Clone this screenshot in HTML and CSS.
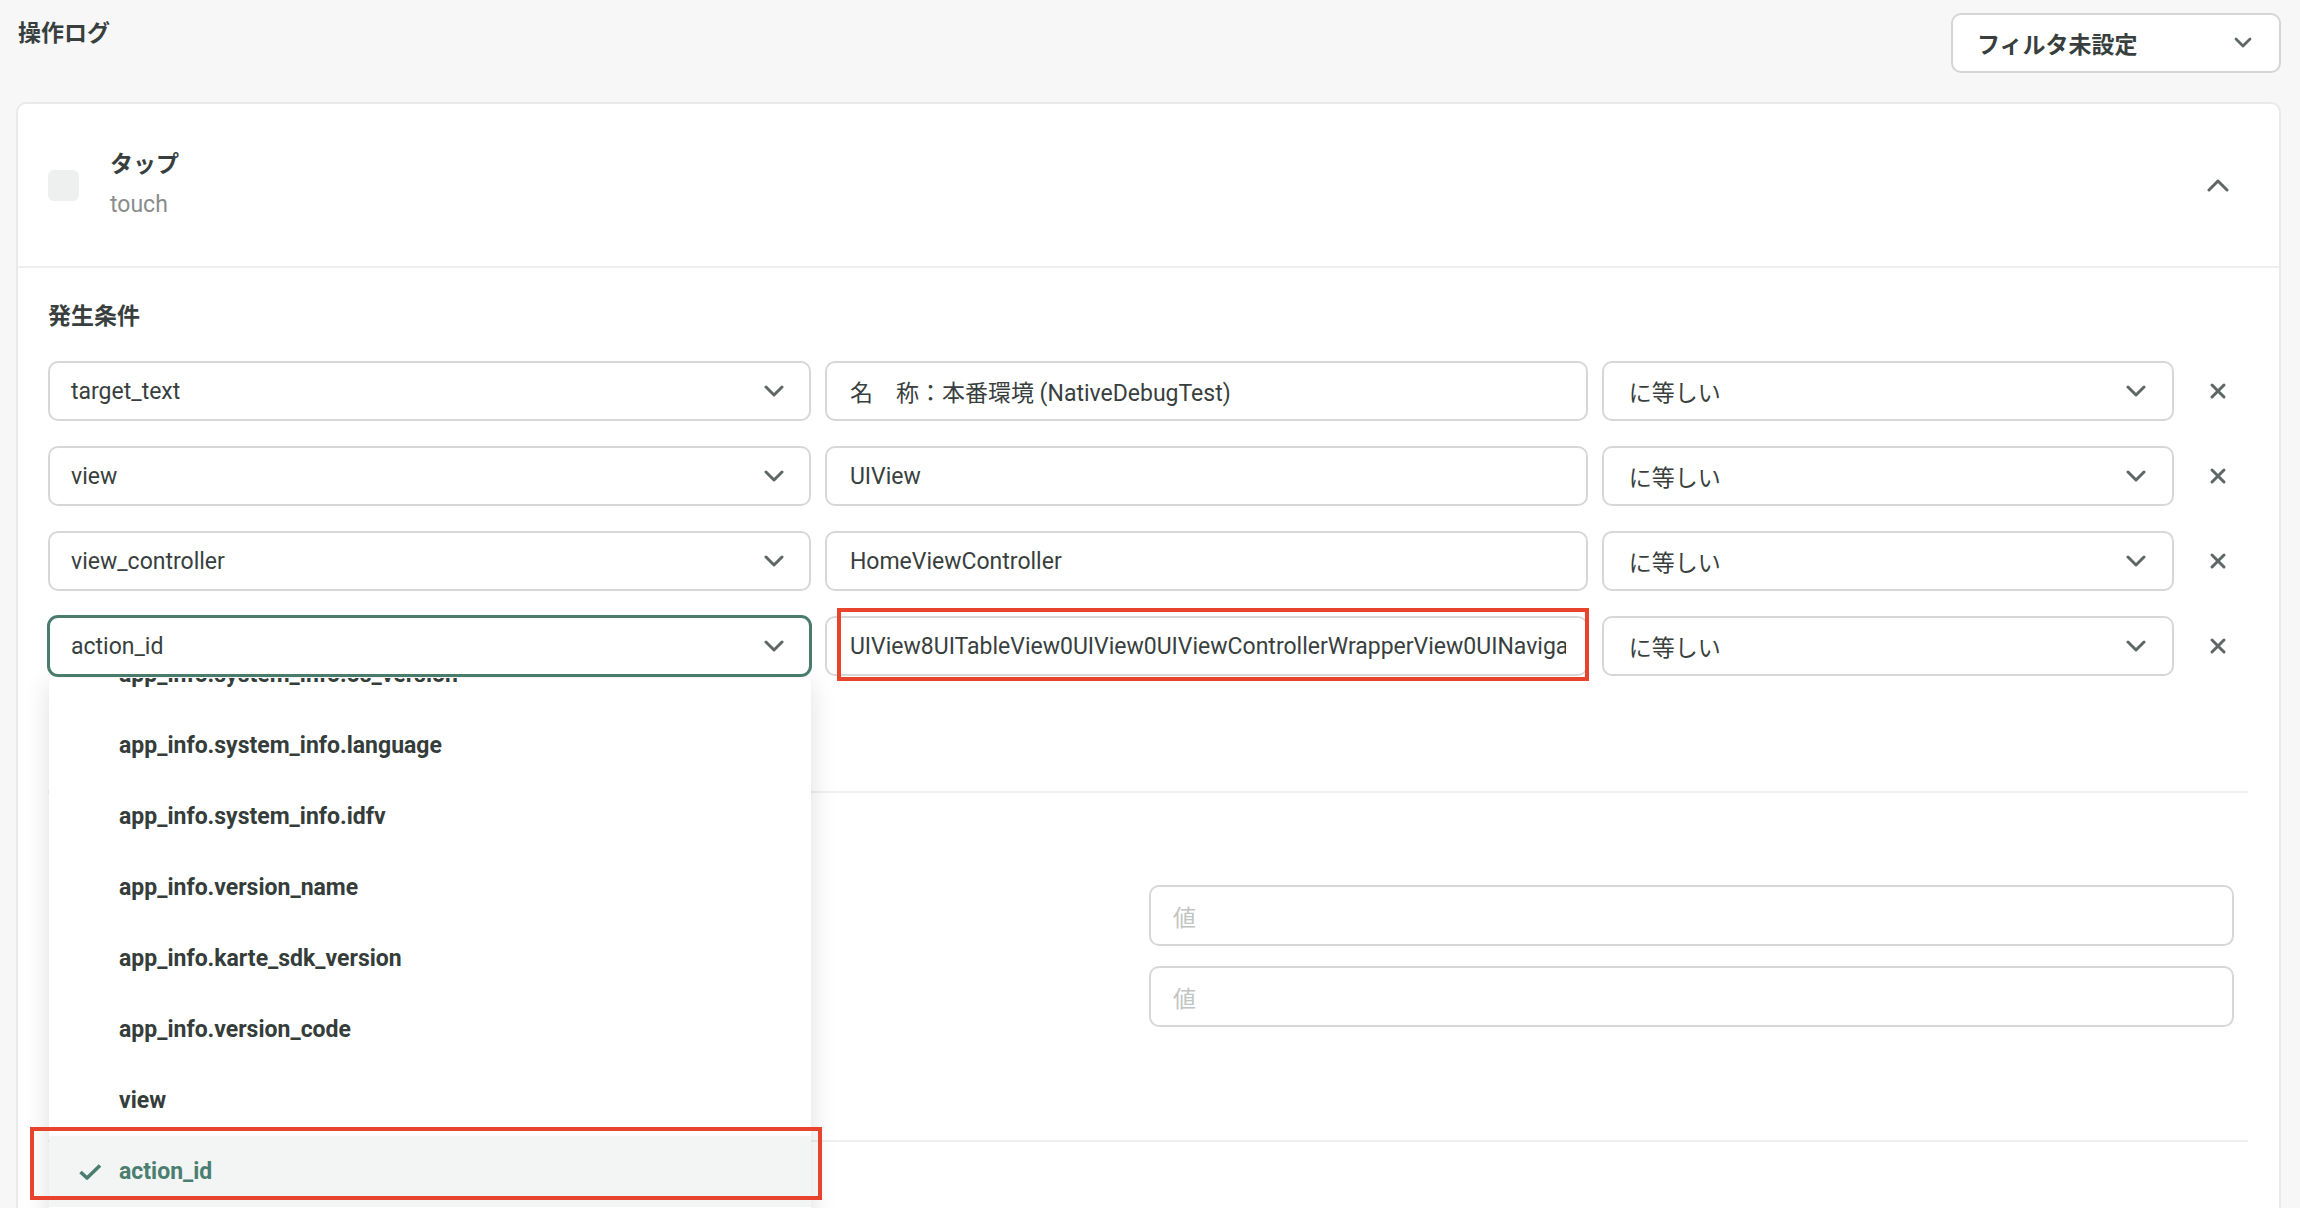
FILE: index.html
```html
<!DOCTYPE html>
<html lang="ja">
<head>
<meta charset="utf-8">
<title>操作ログ</title>
<link rel="stylesheet" href="styles.css">
</head>
<body>
<div class="page">
  <header class="top">
    <h1 class="title">操作ログ</h1>
    <div class="filter">
      <span>フィルタ未設定</span>
      <svg class="chev-filter" width="18" height="12" viewBox="0 0 18 12"><polyline points="2,2 9,9 16,2" fill="none" stroke="#5f6766" stroke-width="2.8" stroke-linecap="round" stroke-linejoin="round"/></svg>
    </div>
  </header>

  <section class="card">
    <div class="card-head">
      <span class="checkbox"></span>
      <div class="event-name">
        <div class="ev-title">タップ</div>
        <div class="ev-sub">touch</div>
      </div>
      <svg class="chev-up" width="22" height="14" viewBox="0 0 22 14"><polyline points="2,12 11,3 20,12" fill="none" stroke="#5f6766" stroke-width="3" stroke-linecap="round" stroke-linejoin="round"/></svg>
    </div>

    <div class="cond">
      <h2 class="cond-label">発生条件</h2>
      <div class="cond-grid">
        <div class="cell">
          <div class="select"><span>target_text</span><svg class="chev" width="20" height="12" viewBox="0 0 20 12"><polyline points="2,2 10,10 18,2" fill="none" stroke="#5f6766" stroke-width="3" stroke-linecap="round" stroke-linejoin="round"/></svg></div>
        </div>
        <div class="cell"><div class="input"><span class="val">名　称：本番環境 (NativeDebugTest)</span></div></div>
        <div class="cell"><div class="select op"><span>に等しい</span><svg class="chev" width="20" height="12" viewBox="0 0 20 12"><polyline points="2,2 10,10 18,2" fill="none" stroke="#5f6766" stroke-width="3" stroke-linecap="round" stroke-linejoin="round"/></svg></div></div>
        <div class="remove"><svg width="18" height="18" viewBox="0 0 18 18"><path d="M3 3 L15 15 M15 3 L3 15" stroke="#5f6766" stroke-width="3" stroke-linecap="round"/></svg></div>

        <div class="cell">
          <div class="select"><span>view</span><svg class="chev" width="20" height="12" viewBox="0 0 20 12"><polyline points="2,2 10,10 18,2" fill="none" stroke="#5f6766" stroke-width="3" stroke-linecap="round" stroke-linejoin="round"/></svg></div>
        </div>
        <div class="cell"><div class="input"><span class="val">UIView</span></div></div>
        <div class="cell"><div class="select op"><span>に等しい</span><svg class="chev" width="20" height="12" viewBox="0 0 20 12"><polyline points="2,2 10,10 18,2" fill="none" stroke="#5f6766" stroke-width="3" stroke-linecap="round" stroke-linejoin="round"/></svg></div></div>
        <div class="remove"><svg width="18" height="18" viewBox="0 0 18 18"><path d="M3 3 L15 15 M15 3 L3 15" stroke="#5f6766" stroke-width="3" stroke-linecap="round"/></svg></div>

        <div class="cell">
          <div class="select"><span>view_controller</span><svg class="chev" width="20" height="12" viewBox="0 0 20 12"><polyline points="2,2 10,10 18,2" fill="none" stroke="#5f6766" stroke-width="3" stroke-linecap="round" stroke-linejoin="round"/></svg></div>
        </div>
        <div class="cell"><div class="input"><span class="val">HomeViewController</span></div></div>
        <div class="cell"><div class="select op"><span>に等しい</span><svg class="chev" width="20" height="12" viewBox="0 0 20 12"><polyline points="2,2 10,10 18,2" fill="none" stroke="#5f6766" stroke-width="3" stroke-linecap="round" stroke-linejoin="round"/></svg></div></div>
        <div class="remove"><svg width="18" height="18" viewBox="0 0 18 18"><path d="M3 3 L15 15 M15 3 L3 15" stroke="#5f6766" stroke-width="3" stroke-linecap="round"/></svg></div>

        <div class="cell open">
          <div class="select focused"><span>action_id</span><svg class="chev" width="20" height="12" viewBox="0 0 20 12"><polyline points="2,2 10,10 18,2" fill="none" stroke="#5f6766" stroke-width="3" stroke-linecap="round" stroke-linejoin="round"/></svg></div>
          <div class="menu">
            <ul class="menu-list">
              <li class="item">app_info.system_info.os_version</li>
              <li class="item">app_info.system_info.language</li>
              <li class="item">app_info.system_info.idfv</li>
              <li class="item">app_info.version_name</li>
              <li class="item">app_info.karte_sdk_version</li>
              <li class="item">app_info.version_code</li>
              <li class="item">view</li>
              <li class="item selected"><svg class="check" width="24" height="16" viewBox="0 0 24 16"><polyline points="2.5,8 9,14 22,1.5" fill="none" stroke="#4b7e70" stroke-width="3.6" stroke-linejoin="round"/></svg>action_id</li>
            </ul>
          </div>
          <div class="mark mark-item"></div>
        </div>
        <div class="cell">
          <div class="input"><span class="val">UIView8UITableView0UIView0UIViewControllerWrapperView0UINavigationTransitionView0UILayoutContainerView</span></div>
          <div class="mark mark-input"></div>
        </div>
        <div class="cell"><div class="select op"><span>に等しい</span><svg class="chev" width="20" height="12" viewBox="0 0 20 12"><polyline points="2,2 10,10 18,2" fill="none" stroke="#5f6766" stroke-width="3" stroke-linecap="round" stroke-linejoin="round"/></svg></div></div>
        <div class="remove"><svg width="18" height="18" viewBox="0 0 18 18"><path d="M3 3 L15 15 M15 3 L3 15" stroke="#5f6766" stroke-width="3" stroke-linecap="round"/></svg></div>
      </div>
    </div>

    <div class="values">
      <div class="value-col">
        <div class="input placeholder">値</div>
        <div class="input placeholder">値</div>
      </div>
    </div>

    <div class="more"></div>
  </section>
</div>
</body>
</html>
```

FILE: styles.css
```css
* { box-sizing: border-box; }

html, body {
  margin: 0;
  padding: 0;
  height: 100%;
  overflow: hidden;
}

body {
  background: #f7f7f7;
  font-family: Roboto, "Noto Sans CJK JP", sans-serif;
  font-size: 23px;
  color: #383f3e;
}

.page {
  padding: 0 19px 0 16px;
}

.top {
  display: flex;
  justify-content: space-between;
  align-items: flex-start;
  padding-top: 13px;
  height: 102px;
}

.title {
  margin: 5px 0 0 2px;
  font-size: 23px;
  line-height: 32px;
  font-weight: 700;
  color: #383f3e;
}

.filter {
  width: 330px;
  height: 60px;
  background: #fff;
  border: 2px solid #d4d6d6;
  border-radius: 10px;
  display: flex;
  align-items: center;
  justify-content: space-between;
  padding: 0 27px 0 24px;
  font-weight: 700;
}

.card {
  background: #fff;
  border: 2px solid #e9eaea;
  border-radius: 10px;
  height: 1120px;
}

.card-head {
  display: flex;
  align-items: center;
  height: 164px;
  padding: 0 50px 0 30px;
  border-bottom: 2px solid #efefef;
}

.checkbox {
  width: 31px;
  height: 31px;
  border-radius: 6px;
  background: #eef0ef;
  flex: none;
}

.event-name {
  margin-left: 31px;
  flex: 1;
}

.ev-title {
  font-weight: 700;
  line-height: 40px;
}

.ev-sub {
  color: #8a8d8c;
  line-height: 40px;
}

.chev-up { flex: none; }

.cond {
  margin: 0 31px 0 30px;
  padding: 34px 0 115px 0;
  border-bottom: 2px solid #eeefef;
}

.cond-label {
  margin: 0 0 29px 0;
  font-size: 23px;
  line-height: 30px;
  font-weight: 700;
}

.cond-grid {
  display: grid;
  grid-template-columns: minmax(0, 4fr) minmax(0, 4fr) minmax(0, 3fr) 60px;
  column-gap: 14px;
  row-gap: 25px;
}

.cell {
  position: relative;
  min-width: 0;
}

.select,
.input {
  height: 60px;
  background: #fff;
  border: 2px solid #d6d8d8;
  border-radius: 10px;
  display: flex;
  align-items: center;
}

.select {
  justify-content: space-between;
  padding: 0 25px 0 21px;
}

.select.op {
  padding: 0 26px 0 25px;
}

.select.focused {
  border-color: #4a7c6e;
  box-shadow: 0 0 0 1px #4a7c6e;
  position: relative;
  z-index: 6;
}

.input {
  padding: 0 20px 0 23px;
}

.val {
  flex: 1;
  min-width: 0;
  white-space: nowrap;
  overflow: hidden;
}

.remove {
  display: flex;
  align-items: center;
  justify-content: center;
}

.menu {
  position: absolute;
  top: 62px;
  left: 1px;
  right: 0;
  height: 560px;
  overflow: hidden;
  background: #fff;
  border-radius: 6px;
  box-shadow: 0 4px 26px rgba(0, 0, 0, 0.13);
  z-index: 5;
}

.menu-list {
  list-style: none;
  margin: -39px 0 0 0;
  padding: 0;
}

.item {
  height: 71px;
  display: flex;
  align-items: center;
  padding-left: 70px;
  font-weight: 700;
  color: #353d3b;
  white-space: nowrap;
  position: relative;
}

.item.selected {
  background: #f3f5f4;
  color: #4b7e70;
}

.check {
  position: absolute;
  left: 29px;
  top: 28px;
}

.mark {
  position: absolute;
  border: 4px solid #e8432d;
  z-index: 8;
  pointer-events: none;
}

.mark-input {
  left: 12px;
  right: -1px;
  top: -8px;
  bottom: -5px;
}

.mark-item {
  left: -18px;
  width: 792px;
  top: 511px;
  height: 73px;
}

.values {
  margin: 0 31px 0 30px;
  padding: 92px 14px 113px 0;
  border-bottom: 2px solid #eeefef;
  display: flex;
  justify-content: flex-end;
}

.value-col {
  width: 1085px;
  display: flex;
  flex-direction: column;
  gap: 20px;
}

.value-col .input {
  height: 61px;
  padding-left: 22px;
}

.placeholder {
  color: #c2c4c4;
}

.more {
  height: 60px;
}
```
